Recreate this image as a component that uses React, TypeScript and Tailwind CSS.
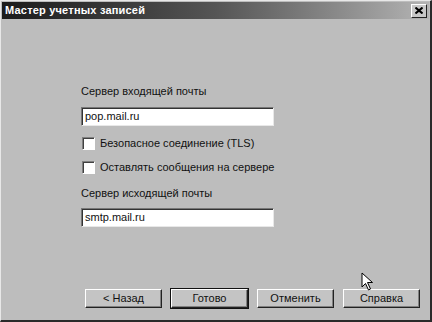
import React from "react";

function Checkbox({ label }: { label: string }) {
  return (
    <label className="flex items-center gap-[5px] h-[13px]">
      <span className="w-[13px] h-[13px] bg-white border-t border-l border-t-[#808080] border-l-[#808080] border-b border-r border-b-white border-r-white shadow-[inset_1px_1px_0_#404040]" />
      <span>{label}</span>
    </label>
  );
}

function Button({ label, active }: { label: string; active?: boolean }) {
  return (
    <button
      className={
        "w-[77px] h-[19px] flex items-center justify-center bg-[#c4c4c4] border-t border-l border-t-white border-l-white border-b border-r border-b-[#222] border-r-[#222] shadow-[inset_-1px_-1px_0_#808080] " +
        (active ? "outline outline-1 outline-[#111]" : "")
      }
    >
      {label}
    </button>
  );
}

export default function App() {
  return (
    <div className="w-[432px] h-[322px] bg-[#bdbdbd] text-[11px] text-[#111] font-['Liberation_Sans',sans-serif] border-l border-t border-l-[#e8e8e8] border-t-[#e8e8e8] border-r-2 border-b-2 border-r-[#2a2a2a] border-b-[#2a2a2a] p-[1px] flex flex-col relative">
      <div className="h-[17px] flex items-center justify-between pl-[3px] pr-[2px] bg-gradient-to-r from-[#1c1c1c] via-[#555] to-[#b4b4b4]">
        <span className="text-white font-bold text-[11px] tracking-[0.2px]">Мастер учетных записей</span>
        <span className="w-[16px] h-[14px] bg-[#c8c8c8] border-t border-l border-t-white border-l-white border-b border-r border-b-[#222] border-r-[#222] flex items-center justify-center">
          <svg width="8" height="7" viewBox="0 0 8 7">
            <path d="M0.5 0.5 L7.5 6.5 M7.5 0.5 L0.5 6.5" stroke="#000" strokeWidth="2" />
          </svg>
        </span>
      </div>
      <div className="flex-1 flex flex-col">
        <div className="pl-[79px] pt-[66px] flex flex-col">
          <div className="h-[13px] leading-[13px]">Сервер входящей почты</div>
          <div className="mt-[9px] w-[193px] h-[19px] bg-white border-t border-l border-t-[#777] border-l-[#777] border-b border-r border-b-[#e8e8e8] border-r-[#e8e8e8] shadow-[inset_1px_1px_0_#333] pl-[3px] flex items-center">
            pop.mail.ru
          </div>
          <div className="mt-[11px] pl-[1px]">
            <Checkbox label="Безопасное соединение (TLS)" />
          </div>
          <div className="mt-[11px] pl-[1px]">
            <Checkbox label="Оставлять сообщения на сервере" />
          </div>
          <div className="mt-[13px] h-[13px] leading-[13px]">Сервер исходящей почты</div>
          <div className="mt-[8px] w-[193px] h-[19px] bg-white border-t border-l border-t-[#777] border-l-[#777] border-b border-r border-b-[#e8e8e8] border-r-[#e8e8e8] shadow-[inset_1px_1px_0_#333] pl-[3px] flex items-center">
            smtp.mail.ru
          </div>
        </div>
        <div className="mt-auto mb-[11px] pl-[83px] flex gap-[9px]">
          <Button label="< Назад" />
          <Button label="Готово" active />
          <Button label="Отменить" />
          <Button label="Справка" />
        </div>
      </div>
      <svg className="absolute left-[360px] top-[271px]" width="14" height="20" viewBox="0 0 14 20">
        <path d="M1 1 L1 15 L4.5 11.5 L7.5 18 L9.5 17 L6.5 10.5 L11.5 10.5 Z" fill="#fff" stroke="#000" strokeWidth="1" strokeLinejoin="miter" />
      </svg>
    </div>
  );
}
